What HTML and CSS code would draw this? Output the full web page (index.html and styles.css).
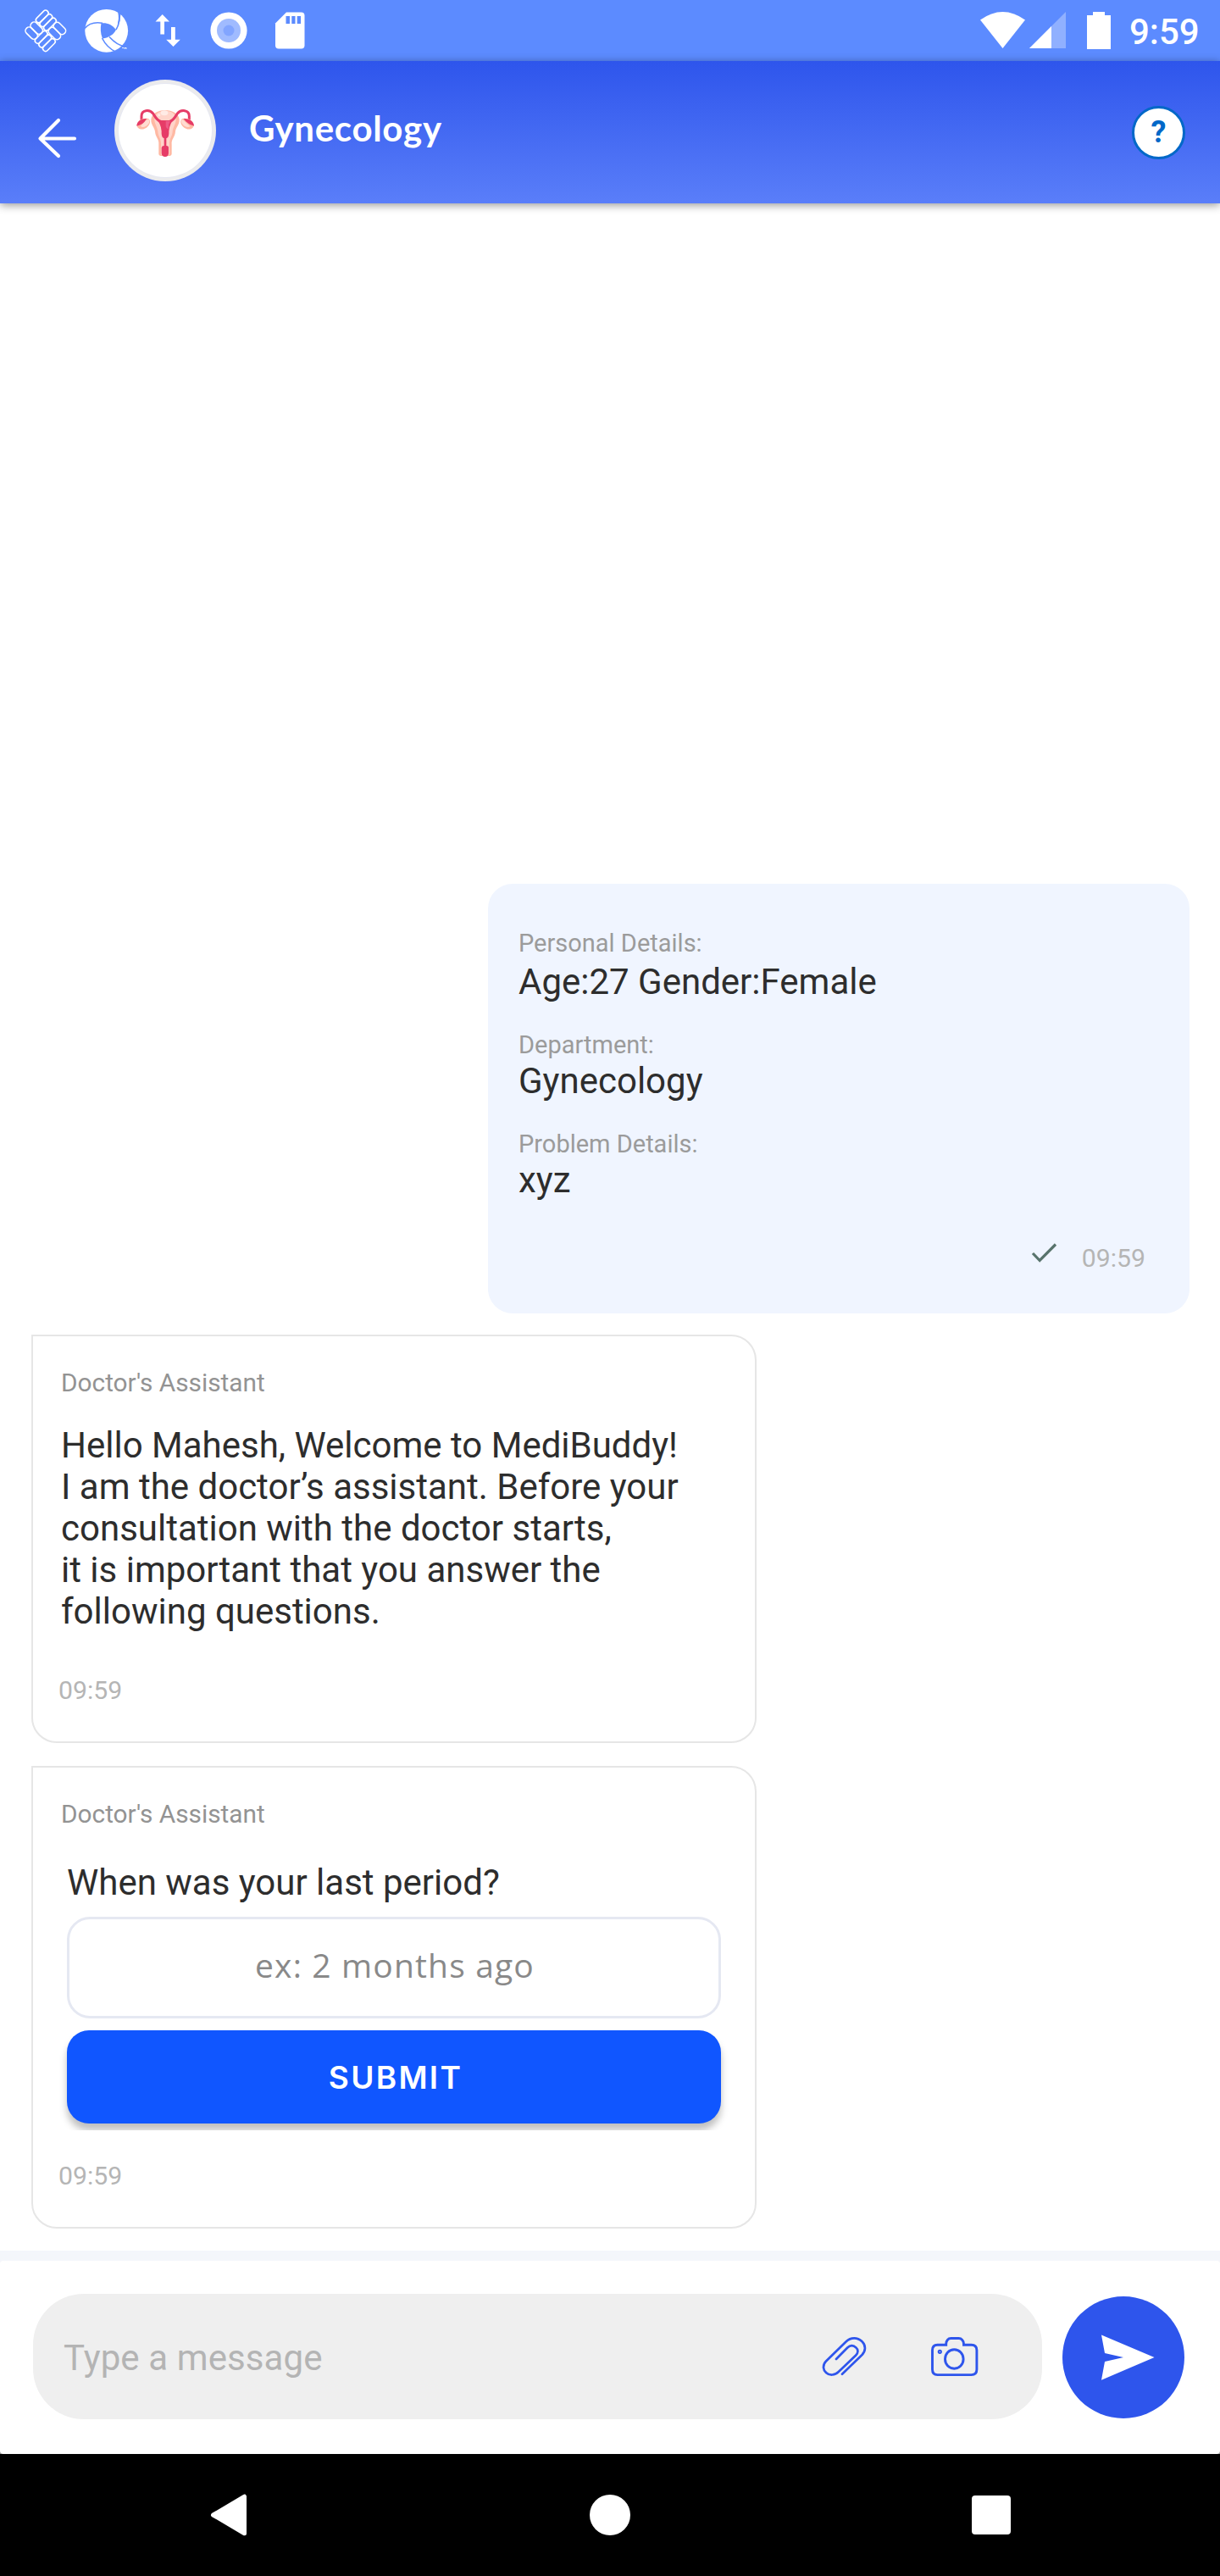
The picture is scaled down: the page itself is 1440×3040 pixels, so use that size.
FILE: index.html
```html
<!DOCTYPE html>
<html lang="en">
<head>
<meta charset="utf-8">
<title>Gynecology</title>
<link rel="stylesheet" href="styles.css">
</head>
<body>
<div class="screen">
  <div class="status">
    <svg class="status-left" width="400" height="72" viewBox="0 0 400 72">
      <!-- woven tile notification -->
      <g transform="translate(53.8 36.3) rotate(45)" fill="none" stroke="#fff" stroke-width="1.6">
        <rect x="-18" y="-18" width="6.500" height="18" rx="3.200"/><rect x="-11.500" y="-18" width="6.500" height="18" rx="3.200"/><rect x="-5" y="-18" width="6.500" height="18" rx="3.200"/>
        <rect x="1.500" y="-18" width="16.500" height="8.500" rx="4"/><rect x="1.500" y="-9.500" width="16.500" height="8.500" rx="4"/>
        <rect x="-1.500" y="0" width="6.500" height="18" rx="3.200"/><rect x="5" y="0" width="6.500" height="18" rx="3.200"/><rect x="11.500" y="0" width="6.500" height="18" rx="3.200"/>
        <rect x="-18" y="1" width="16.500" height="8.500" rx="4"/><rect x="-18" y="9.500" width="16.500" height="8.500" rx="4"/>
      </g>
      <!-- shutter -->
      <circle cx="125.7" cy="36.3" r="25.4" fill="#fff"/>
      <path d="M119.5 27.3C126 26.5 132 28.5 137 35C134.5 40.5 129 44.3 121 45.5C118.500 39.500 118.300 33 119.500 27.300Z" fill="#5c8bff"/>
      <g fill="none" stroke="#5c8bff" stroke-width="1.6">
        <path d="M100 33.500C105 27.500 112 25.700 121 27.300"/>
        <path d="M137 35C141 29 142 21 139.500 11"/>
        <path d="M120.500 45C124 52 129 57.500 137 61.500"/>
        <path d="M129 43.500C134 49 140 54 148 55"/>
      </g>
      <path d="M139.500 11L142.500 16L141.500 25L138.500 31L140 22Z" fill="#5c8bff"/>
      <path d="M144 56.500H146M147 58V56L148 57L149 56V58" stroke="#fff" stroke-width=".8" fill="none"/>
      <!-- data arrows -->
      <path d="M191.700 17L200 25.500H194V40.500H189.300V25.500H183.500ZM204.500 55L196.200 46.800H202V32H206.800V46.800H212.800Z" fill="#fff"/>
      <!-- recording -->
      <circle cx="270" cy="36" r="21.600" fill="#fff"/><circle cx="270" cy="36" r="14" fill="#a0bbff"/><circle cx="270" cy="36" r="6.500" fill="#82a5ff"/>
      <!-- memory card -->
      <path d="M338 14.500H355.500Q359.500 14.500 359.500 18.500V53.500Q359.500 57.500 355.500 57.500H329Q325 57.500 325 53.500V27.500Z" fill="#fff"/>
      <path d="M337.500 19H342V28H337.500ZM344.300 19H348.500V28H344.300ZM350.700 19H355V28H350.700Z" fill="#5c8bff"/>
    </svg>
    <svg class="status-right" width="172" height="72" viewBox="1150 0 172 72">
      <path d="M1157 23.500Q1183.500 4.500 1210 23.500L1183.500 57Z" fill="#fff"/>
      <path d="M1258 14V57H1215Z" fill="#fff" opacity=".32"/>
      <path d="M1241 31V57H1215Z" fill="#fff"/>
      <path d="M1283 18H1290V14H1304V18H1311V58H1283Z" fill="#fff"/>
    </svg>
    <span class="clock">9:59</span>
  </div>

  <header class="header">
    <svg class="back" width="50" height="50" viewBox="43 138 50 50"><path d="M88 163.500H47.500M69 142L47.500 163.500L69 184" fill="none" stroke="#fff" stroke-width="4.200" stroke-linecap="round" stroke-linejoin="round"/></svg>
    <svg class="avatar" width="120" height="120" viewBox="405 282 360 360">
      <circle cx="585" cy="462" r="180" fill="#ebebed"/><circle cx="585" cy="462" r="168" fill="#e6e8f2"/><circle cx="585" cy="462" r="165" fill="#fff"/>
      <path d="M585 390C560 390 536 402 535 424C534 442 548 452 549 466C550 486 564 492 562 512V545Q563 552 573 552H597Q607 552 608 545V512C606 492 620 486 621 466C622 452 636 442 635 424C634 402 610 390 585 390Z" fill="#ffb9a3"/>
      <path d="M585 392C564 392 547 402 547 422C547 440 558 450 559 466C560 484 571 490 570 512V548H600V512C599 490 610 484 611 466C612 450 623 440 623 422C623 402 606 392 585 392Z" fill="#ffd5ca"/>
      <ellipse cx="582" cy="400" rx="13" ry="9" fill="#ffebe5"/><circle cx="563" cy="407" r="5" fill="#ffebe5"/>
      <path d="M501 425V411C501 389 529 386 542 402C551 416 556 427 570 431H600C614 427 619 416 628 402C641 386 670 389 670 411V425" fill="none" stroke="#e63c67" stroke-width="9"/>
      <path d="M559 424Q585 430 611 424L604 440Q599 450 598 464Q599 480 594 487L589 490V516Q597 516 597 523V543Q596 555 585 555Q573 555 572 543V523Q573 516 581 516V490L576 487Q571 480 572 464Q571 450 566 440Z" fill="#e63c67"/>
      <path d="M587 428H603L597 441V455Q590 458 587 447Z" fill="#ee5a86"/>
      <path d="M485 443C487 427 503 416 525 420C535 426 532 440 522 449C509 462 486 460 485 443Z" fill="#ffb9a3"/>
      <path d="M498 447C505 440 510 426 526 422C533 431 526 441 516 447C510 450 503 451 498 447Z" fill="#ffdcd2"/>
      <path d="M484 446C484 431 500 419 519 420C513 429 511 439 484 446Z" fill="#e63c67"/>
      <path d="M686 443C684 427 668 416 646 420C636 426 639 440 649 449C662 462 685 460 686 443Z" fill="#ffb9a3"/>
      <path d="M674 447C667 443 655 428 645 422C638 431 645 441 655 447C661 450 669 451 674 447Z" fill="#ffdcd2"/>
      <path d="M687 446C687 431 671 419 650 420C657 430 667 440 687 446Z" fill="#e63c67"/>
    </svg>
    <h1 class="title">Gynecology</h1>
    <button class="help">?</button>
  </header>

  <main class="chat">
    <section class="sent">
      <div class="label first">Personal Details:</div>
      <div class="value">Age:27 Gender:Female</div>
      <div class="label">Department:</div>
      <div class="value">Gynecology</div>
      <div class="label">Problem Details:</div>
      <div class="value">xyz</div>
      <div class="receipt">
        <svg width="34" height="28" viewBox="1215 1464 34 28"><path d="M1219 1479L1227.200 1487.500L1246 1468.500" fill="none" stroke="#58736c" stroke-width="3.200"/></svg>
        <span class="time">09:59</span>
      </div>
    </section>

    <section class="received">
      <div class="sender">Doctor's Assistant</div>
      <p class="message">Hello Mahesh, Welcome to MediBuddy!<br>I am the doctor’s assistant. Before your<br>consultation with the doctor starts,<br>it is important that you answer the<br>following questions.</p>
      <div class="time">09:59</div>
    </section>

    <section class="received question">
      <div class="sender">Doctor's Assistant</div>
      <p class="message">When was your last period?</p>
      <div class="answer">ex: 2 months ago</div>
      <div class="submit-wrap"><button class="submit">SUBMIT</button></div>
      <div class="time">09:59</div>
    </section>
  </main>

  <div class="dock">
    <div class="composer">
      <div class="field">
        <span class="hint">Type a message</span>
        <svg class="clip" width="53" height="48" viewBox="0 0 53 48" fill="none" stroke="#2e55ec" stroke-width="2.700" stroke-linecap="round"><path d="M24 44.700L46.500 23C52.500 17.500 52 10.500 47.500 6.300C42.500 1 34 1 28.800 6.300L5 29.500C1 33.500 1 39.500 5 42.900C9 46.700 15.500 46.300 19.500 42.300L40 22.800C43.500 19.500 43 15.700 40.200 13.300C37.500 10.300 33.500 10.300 30.300 13.500L17 27"/></svg>
        <svg class="camera" width="58" height="48" viewBox="0 0 58 48" fill="none" stroke="#2e55ec" stroke-width="2.900"><path d="M8.500 10.200H18.700V9C18.700 5.500 21 2.500 24.500 2.500H33.500C37 2.500 39.500 5.500 39.500 9V10.200H48.500Q54.900 10.200 54.900 16.500V39.300Q54.900 45.600 48.500 45.600H8.500Q2.500 45.600 2.500 39.300V16.500Q2.500 10.200 8.500 10.200Z"/><ellipse cx="28.300" cy="27" rx="10.800" ry="11.200"/><circle cx="11.300" cy="18.300" r="1.600" stroke-width="2"/></svg>
      </div>
      <button class="send"><svg width="64" height="54" viewBox="1299 2754 64 54"><path d="M1300 2754.500L1362.500 2781L1300 2807.700L1304 2786L1326 2781L1304 2776Z" fill="#fff"/></svg></button>
    </div>
  </div>

  <nav class="nav">
    <svg width="44" height="50" viewBox="248 2943 44 50"><path d="M251.500 2968L288.500 2946.200V2989.800Z" fill="#fff" stroke="#fff" stroke-width="5" stroke-linejoin="round"/></svg>
    <span class="home"></span>
    <span class="recent"></span>
  </nav>
</div>
</body>
</html>
```
FILE: styles.css
```css
* { box-sizing: border-box; }
body { margin: 0; background: #fff; font-family: Roboto, sans-serif; }
button { border: 0; padding: 0; }
svg { display: block; flex: none; }
.screen { width: 1440px; height: 3040px; display: flex; flex-direction: column; overflow: hidden; background: #fff; }

.status { height: 72px; flex: none; display: flex; background: #5c8bff; color: #fff; }
.status-right { margin-left: auto; }
.clock { width: 118px; padding: 13px 0 0 11px; font-size: 42px; line-height: 50px; font-weight: 500; }

.header { height: 168px; flex: none; display: flex; align-items: flex-start; padding: 22px 41px 0 43px; background: linear-gradient(#2e55ec, #5a7ef9); box-shadow: 0 2px 10px rgba(0, 0, 0, .42); }
.back { margin-top: 44px; }
.avatar { margin-left: 42px; }
.title { margin: 32px auto 0 39px; color: #fff; font: 700 42px/50px Lato, sans-serif; letter-spacing: .7px; }
.help { width: 63px; height: 63px; margin-top: 31px; border: 3px solid #0168c8; border-radius: 50%; background: #fff; color: #0168c8; font: 700 36px/57px Roboto, sans-serif; }

.chat { height: 2416px; flex: none; display: flex; flex-direction: column; align-items: flex-start; justify-content: flex-end; padding: 0 36px 26px 37px; color: #2d2d2d; }
.label { font-size: 29px; line-height: 36px; margin-top: 32px; color: #9b9b9b; }
.label.first { margin: 0 0 3px; }
.value { font-size: 42px; line-height: 49px; }
.time { font-size: 30.2px; line-height: 36px; color: #b5b5b5; }
.sent { width: 828px; height: 507px; align-self: flex-end; margin-bottom: 25px; padding: 52px 52px 0 36px; border-radius: 29px; background: #f0f5ff; }
.receipt { display: flex; justify-content: flex-end; margin-top: 47px; }
.receipt .time { margin: 3px 0 0 28px; }

.received { width: 856px; height: 482px; padding: 37px 34px 0 33px; border: 2px solid #e6e6e6; border-radius: 0 30px 30px 30px; background: #fff; }
.sender { font-size: 29.8px; line-height: 36px; color: #939393; }
.message { margin: 31px 0 0; font-size: 42px; line-height: 49px; white-space: nowrap; }
.received .time { margin: 51px 0 0 -3px; }
.question { height: 546px; margin-top: 27px; }
.question .message { margin: 38px 0 0 7px; }
.answer { width: 772px; height: 120px; margin: 16px 0 0 7px; padding: 0 0 6px 2px; border: 3px solid #e5e8f2; border-radius: 27px; color: #898989; font: 39px/108px "Open Sans", sans-serif; letter-spacing: 1.15px; text-align: center; }
.submit-wrap { width: 796px; height: 118px; margin: 14px 0 0 -5px; padding: 0 12px; overflow: hidden; }
.submit { display: block; width: 772px; height: 110px; padding: 1px 0 0 4px; border-radius: 26px; background: #1056ff; color: #fff; font: 600 37px/108px Inter, sans-serif; letter-spacing: 2.3px; box-shadow: 0 8px 8px rgba(0, 0, 0, .25); }
.question .time { margin-top: 36px; }

.dock { height: 240px; flex: none; padding-top: 12px; background: linear-gradient(#f4f6fb 0 50%, #999 50%); }
.composer { height: 228px; display: flex; padding: 39px 42px 0 39px; border-radius: 4px; background: #fff; }
.field { width: 1191px; height: 148px; display: flex; align-items: flex-start; padding: 50px 74px 0 36px; border-radius: 60px; background: #efefef; }
.hint { margin: 1px auto 0 0; color: #b4b4b4; font-size: 42px; line-height: 49px; letter-spacing: .1px; }
.camera { margin-left: 75px; }
.send { width: 144px; height: 144px; display: grid; place-items: center; margin: 3px 0 0 24px; padding-left: 10px; border-radius: 50%; background: #2e55ec; }

.nav { height: 144px; flex: none; display: flex; align-items: center; justify-content: space-between; padding: 0 247px 0 248px; background: #000; }
.home { width: 48px; height: 48px; border-radius: 50%; background: #fff; }
.recent { width: 46px; height: 46px; border-radius: 4px; background: #fff; }
```
